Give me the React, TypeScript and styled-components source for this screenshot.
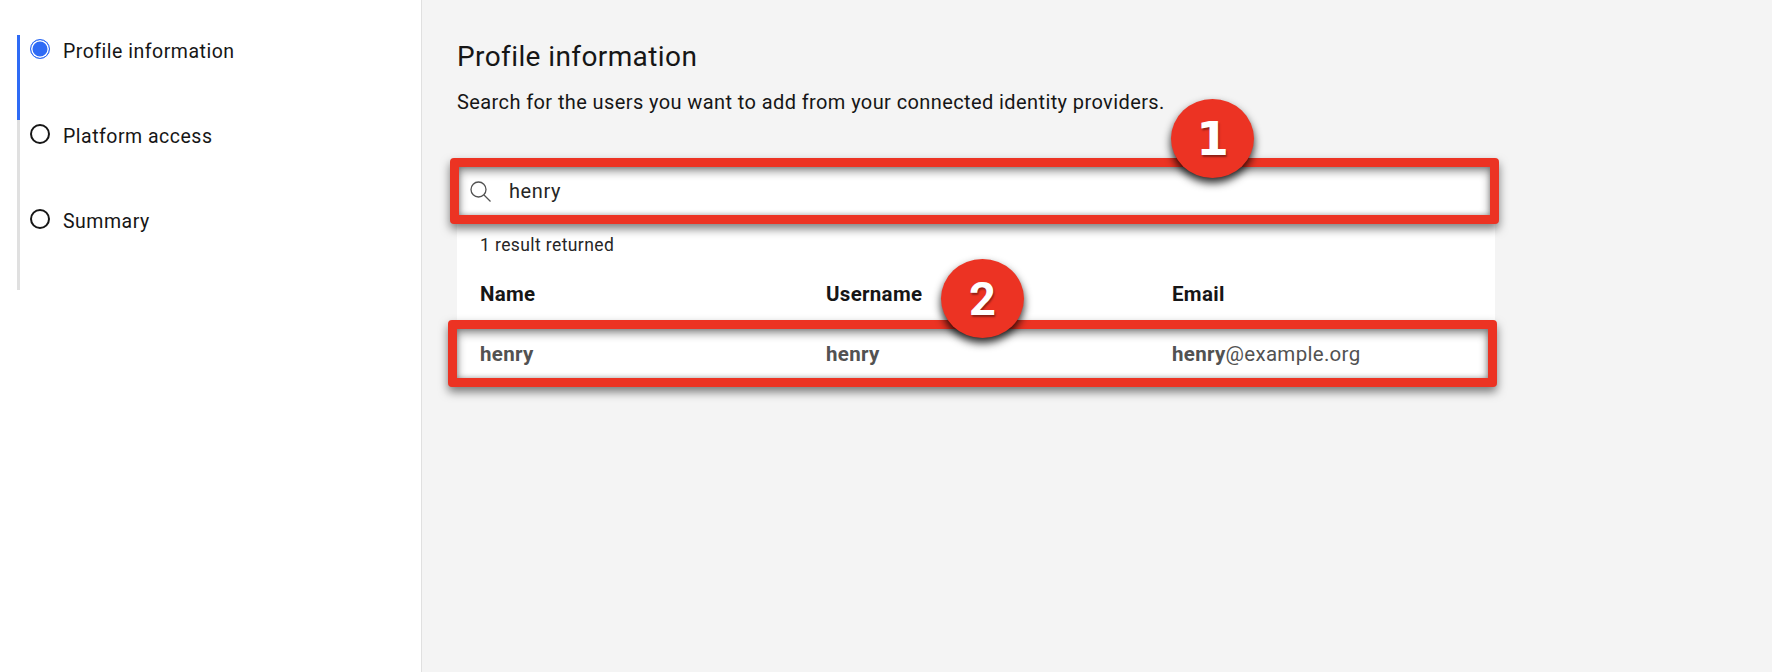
import styled, { createGlobalStyle } from 'styled-components';

const GlobalStyle = createGlobalStyle`
    html, body {
        margin: 0;
        padding: 0;
        background: #f4f4f4;
    }
    * {
        box-sizing: border-box;
    }
`;

const FONT = `Roboto, "Noto Sans", sans-serif`;

const Page = styled.div`
    width: 1772px;
    height: 672px;
    display: flex;
    overflow: hidden;
    font-family: ${FONT};
    color: #161616;
`;

const Sidebar = styled.aside`
    width: 422px;
    height: 100%;
    padding: 35px 0 0 17px;
    background: #fff;
    border-right: 1px solid #e0e0e0;
`;

const Step = styled.div<{ $active?: boolean }>`
    height: 85px;
    display: flex;
    align-items: flex-start;
    gap: 13px;
    padding: 4px 0 0 10px;
    border-left: 3px solid ${(props) => (props.$active ? '#2f6bf5' : '#e0e0e0')};
`;

const Radio = styled.span<{ $active?: boolean }>`
    width: 20px;
    height: 20px;
    border-radius: 50%;
    flex: none;
    border: ${(props) => (props.$active ? '1.5px solid #2f6bf5' : '2px solid #161616')};
    background: ${(props) => (props.$active ? '#2f6bf5' : '#fff')};
    box-shadow: ${(props) => (props.$active ? 'inset 0 0 0 1.5px #fff' : 'none')};
`;

const StepLabel = styled.span`
    font-size: 19.5px;
    line-height: 20px;
    letter-spacing: 0.5px;
    padding-top: 3px;
`;

const Main = styled.main`
    flex: 1;
    padding: 41px 0 0 35px;
    position: relative;
`;

const Title = styled.h1`
    margin: 0;
    font-size: 28px;
    font-weight: 400;
    line-height: 32px;
    letter-spacing: 0.4px;
`;

const Lead = styled.p`
    margin: 17px 0 0;
    font-size: 20px;
    line-height: 24px;
    letter-spacing: 0.4px;
`;

const Content = styled.div`
    width: 1038px;
    margin-top: 44px;
`;

const Callout = styled.div`
    position: relative;
    width: 1049px;
    margin-left: -9px;
    border: 9px solid #ec3323;
    border-radius: 4px;
    background: #fff;
    box-shadow: 0 5px 10px rgba(0, 0, 0, 0.5), inset 0 4px 10px rgba(0, 0, 0, 0.45), inset 0 0 5px rgba(0, 0, 0, 0.25);
    z-index: 1;
`;

const SearchCallout = styled(Callout)`
    margin-left: -7px;
    width: 1049px;
`;

const SearchRow = styled.div`
    height: 48px;
    display: flex;
    align-items: center;
    gap: 18px;
    padding-left: 11px;
    font-size: 20px;
    letter-spacing: 0.6px;
    color: #262626;
`;

const Results = styled.div`
    background: #fff;
`;

const ResultCount = styled.div`
    padding: 11px 0 0 23px;
    height: 37px;
    font-size: 17.5px;
    line-height: 20px;
    letter-spacing: 0.4px;
    color: #262626;
`;

const Row = styled.div`
    display: grid;
    grid-template-columns: 346px 346px 1fr;
    align-items: center;
    padding-left: 23px;
    font-size: 20.5px;
    letter-spacing: 0.3px;
`;

const HeadRow = styled(Row)`
    height: 59px;
    padding-top: 6px;
    font-weight: 700;
`;

const BodyRow = styled(Row)`
    height: 49px;
    color: #525252;
`;

const Match = styled.strong`
    font-weight: 700;
`;

const Badge = styled.div<{ $left: number; $top: number; $font: string }>`
    position: absolute;
    left: ${(props) => props.$left}px;
    top: ${(props) => props.$top}px;
    width: 83px;
    height: 79px;
    border-radius: 50%;
    background: #ec3323;
    box-shadow: 0 5px 9px rgba(0, 0, 0, 0.85);
    display: flex;
    align-items: center;
    justify-content: center;
    z-index: 2;
    color: #fff;
    font-family: ${(props) => props.$font};
    font-weight: 700;
    font-size: 47px;
    text-shadow: 1px 2px 2px rgba(0, 0, 0, 0.4);
`;

const steps = ['Profile information', 'Platform access', 'Summary'];

function SearchIcon() {
    return (
        <svg width="21" height="21" viewBox="0 0 21 21" fill="none" stroke="#525252" strokeWidth="1.3">
            <circle cx="8.5" cy="8.5" r="7.5" />
            <path d="M14 14l6.5 6.5" />
        </svg>
    );
}

export default function App() {
    return (
        <Page>
            <GlobalStyle />
            <Sidebar>
                {steps.map((step, index) => (
                    <Step key={step} $active={index === 0}>
                        <Radio $active={index === 0} />
                        <StepLabel>{step}</StepLabel>
                    </Step>
                ))}
            </Sidebar>
            <Main>
                <Title>Profile information</Title>
                <Lead>Search for the users you want to add from your connected identity providers.</Lead>
                <Content>
                    <SearchCallout>
                        <SearchRow>
                            <SearchIcon />
                            henry
                        </SearchRow>
                    </SearchCallout>
                    <Results>
                        <ResultCount>1 result returned</ResultCount>
                        <HeadRow>
                            <span>Name</span>
                            <span>Username</span>
                            <span>Email</span>
                        </HeadRow>
                    </Results>
                    <Callout>
                        <BodyRow>
                            <Match>henry</Match>
                            <Match>henry</Match>
                            <span>
                                <Match>henry</Match>@example.org
                            </span>
                        </BodyRow>
                    </Callout>
                </Content>
                <Badge $left={749} $top={99} $font={`"DejaVu Sans", sans-serif`}>1</Badge>
                <Badge $left={519} $top={259} $font={`Roboto, sans-serif`}>2</Badge>
            </Main>
        </Page>
    );
}
